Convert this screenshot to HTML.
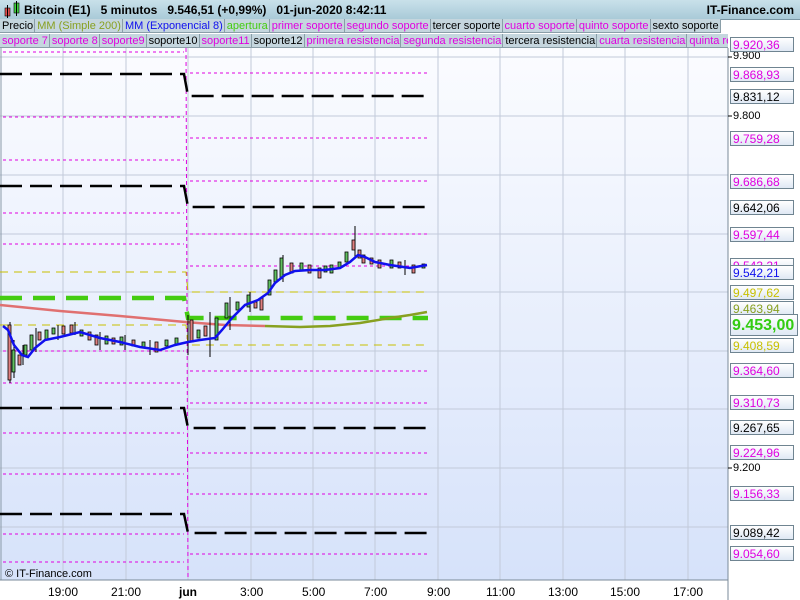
<!DOCTYPE html>
<html><head><meta charset="utf-8"><style>
body{margin:0;width:800px;height:600px;overflow:hidden;font-family:"Liberation Sans",sans-serif;background:#fff;position:relative}
.top{position:absolute;left:0;top:0;width:800px;height:19px;background:linear-gradient(#c9e1ea,#a9cad8);border-bottom:1px solid #7a96a4}
.top b{position:absolute;top:3px;font-size:12px;color:#000;white-space:nowrap}
.row{position:absolute;left:0;height:14px;display:flex;font-size:11px;line-height:14px}
.row span{border:1px solid #8a9ea8;border-top:0;border-left:0;background:#c5d6de;padding:0 1px 0 2px;white-space:nowrap}
.m{color:#e000e0}
.lbl{position:absolute;left:730px;width:64px;height:15px;border:1px solid #6f8491;background:linear-gradient(#fff,#dfe8f4);font-size:12px;line-height:15px;padding-left:2px;box-sizing:border-box;white-space:nowrap;overflow:hidden}
.ax{position:absolute;left:733px;font-size:11px}
.tx{position:absolute;top:585px;font-size:12px}
</style></head><body>
<svg width="800" height="600" style="position:absolute;left:0;top:0">
<defs><linearGradient id="bg" x1="0" y1="0" x2="0" y2="1"><stop offset="0" stop-color="#fbfcff"/><stop offset="1" stop-color="#d6e2fa"/></linearGradient></defs>
<rect x="0" y="48" width="728" height="532" fill="url(#bg)"/>
<g stroke="#c2cada" stroke-width="1">
<line x1="63" y1="48" x2="63" y2="580"/><line x1="126" y1="48" x2="126" y2="580"/><line x1="188" y1="48" x2="188" y2="580"/><line x1="251" y1="48" x2="251" y2="580"/><line x1="313" y1="48" x2="313" y2="580"/><line x1="375" y1="48" x2="375" y2="580"/><line x1="438" y1="48" x2="438" y2="580"/><line x1="500" y1="48" x2="500" y2="580"/><line x1="563" y1="48" x2="563" y2="580"/><line x1="625" y1="48" x2="625" y2="580"/><line x1="688" y1="48" x2="688" y2="580"/>
<line x1="0" y1="57" x2="728" y2="57"/><line x1="0" y1="116" x2="728" y2="116"/><line x1="0" y1="175" x2="728" y2="175"/><line x1="0" y1="234" x2="728" y2="234"/><line x1="0" y1="292" x2="728" y2="292"/><line x1="0" y1="351" x2="728" y2="351"/><line x1="0" y1="409" x2="728" y2="409"/><line x1="0" y1="468" x2="728" y2="468"/><line x1="0" y1="527" x2="728" y2="527"/>
</g>
<line x1="1" y1="48" x2="1" y2="580" stroke="#8a9aa8"/>
<line x1="728" y1="48" x2="728" y2="600" stroke="#7a8a98"/>
<line x1="0" y1="580" x2="728" y2="580" stroke="#7a8a98"/>
<line x1="186" y1="48" x2="188" y2="580" stroke="#e000e0" stroke-dasharray="4,3"/>
<g stroke="#e000e0" stroke-dasharray="3,3" stroke-width="1">
<line x1="3" y1="52" x2="184" y2="52"/><line x1="3" y1="117" x2="184" y2="117"/><line x1="3" y1="160" x2="184" y2="160"/><line x1="3" y1="213" x2="184" y2="213"/><line x1="3" y1="244" x2="184" y2="244"/><line x1="3" y1="351" x2="184" y2="351"/><line x1="3" y1="383" x2="184" y2="383"/><line x1="3" y1="433" x2="184" y2="433"/><line x1="3" y1="474" x2="184" y2="474"/><line x1="3" y1="534" x2="184" y2="534"/><line x1="3" y1="562" x2="184" y2="562"/>
<line x1="190" y1="73" x2="428" y2="73"/><line x1="190" y1="138" x2="428" y2="138"/><line x1="190" y1="181" x2="428" y2="181"/><line x1="190" y1="234" x2="428" y2="234"/><line x1="190" y1="266" x2="428" y2="266"/><line x1="190" y1="371" x2="428" y2="371"/><line x1="190" y1="403" x2="428" y2="403"/><line x1="190" y1="453" x2="428" y2="453"/><line x1="190" y1="494" x2="428" y2="494"/><line x1="190" y1="554" x2="428" y2="554"/>
</g>
<g stroke="#c8c000" stroke-dasharray="8,6" stroke-width="1">
<polyline fill="none" points="0,272 186,272 188,292 428,292"/>
<polyline fill="none" points="0,325 186,325 188,345 428,345"/>
</g>
<g stroke="#000" stroke-width="2.5" fill="none" stroke-dasharray="22,8">
<polyline points="0,74 184,74 188,96 428,96"/>
<polyline points="0,186 184,186 188,207 428,207"/>
<polyline points="0,408 184,408 188,428 428,428"/>
<polyline points="0,514 184,514 188,533 428,533"/>
</g>
<polyline fill="none" stroke="#44cc11" stroke-width="4.5" stroke-dasharray="22,11" points="0,298 184,298 188,318 428,318"/>
<polyline fill="none" stroke="#e07070" stroke-width="2.5" points="0,305 60,311 120,316 185,322 225,325 265,326"/>
<polyline fill="none" stroke="#88a020" stroke-width="2.5" points="265,326 300,327 330,326 360,323 390,318 410,315 427,312"/>
<g stroke="#000" stroke-width="1">
<line x1="10" y1="322" x2="10" y2="383"/><line x1="14" y1="340" x2="14" y2="378"/><line x1="23" y1="345" x2="23" y2="365"/><line x1="36" y1="328" x2="36" y2="352"/><line x1="58" y1="325" x2="58" y2="340"/><line x1="75" y1="322" x2="75" y2="335"/><line x1="100" y1="332" x2="100" y2="350"/><line x1="125" y1="335" x2="125" y2="350"/><line x1="150" y1="340" x2="150" y2="355"/><line x1="188" y1="315" x2="188" y2="355"/><line x1="210" y1="312" x2="210" y2="357"/><line x1="230" y1="297" x2="230" y2="330"/><line x1="250" y1="292" x2="250" y2="312"/><line x1="283" y1="255" x2="283" y2="282"/><line x1="355" y1="226" x2="355" y2="258"/><line x1="405" y1="260" x2="405" y2="275"/>
</g>
<g stroke="#000" stroke-width="0.8">
<rect x="8" y="325" width="3" height="55" fill="#e08080"/><rect x="12" y="350" width="3" height="22" fill="#60c060"/><rect x="18" y="355" width="3" height="10" fill="#e08080"/><rect x="24" y="345" width="3" height="10" fill="#60c060"/><rect x="30" y="335" width="3" height="15" fill="#60c060"/><rect x="38" y="332" width="3" height="8" fill="#e08080"/><rect x="45" y="330" width="3" height="10" fill="#60c060"/><rect x="52" y="328" width="3" height="6" fill="#60c060"/><rect x="62" y="326" width="3" height="8" fill="#e08080"/><rect x="70" y="325" width="3" height="8" fill="#e08080"/><rect x="80" y="330" width="3" height="6" fill="#60c060"/><rect x="88" y="332" width="3" height="8" fill="#e08080"/><rect x="95" y="335" width="3" height="10" fill="#e08080"/><rect x="105" y="336" width="3" height="8" fill="#60c060"/><rect x="112" y="338" width="3" height="6" fill="#e08080"/><rect x="120" y="337" width="3" height="8" fill="#60c060"/><rect x="132" y="340" width="3" height="6" fill="#e08080"/><rect x="142" y="342" width="3" height="6" fill="#60c060"/><rect x="155" y="342" width="3" height="10" fill="#e08080"/><rect x="165" y="340" width="3" height="6" fill="#60c060"/><rect x="175" y="338" width="3" height="6" fill="#60c060"/>
<rect x="190" y="320" width="3" height="22" fill="#e08080"/><rect x="197" y="330" width="3" height="8" fill="#60c060"/><rect x="204" y="326" width="3" height="10" fill="#e08080"/><rect x="215" y="318" width="3" height="22" fill="#60c060"/><rect x="225" y="303" width="3" height="15" fill="#60c060"/><rect x="236" y="302" width="3" height="8" fill="#60c060"/><rect x="247" y="295" width="3" height="12" fill="#60c060"/><rect x="254" y="302" width="3" height="6" fill="#e08080"/><rect x="260" y="298" width="3" height="12" fill="#e08080"/><rect x="268" y="280" width="3" height="15" fill="#60c060"/><rect x="274" y="270" width="3" height="12" fill="#60c060"/><rect x="280" y="258" width="3" height="20" fill="#60c060"/><rect x="290" y="263" width="3" height="10" fill="#e08080"/><rect x="300" y="263" width="3" height="8" fill="#60c060"/><rect x="308" y="265" width="3" height="8" fill="#e08080"/><rect x="318" y="268" width="3" height="10" fill="#e08080"/><rect x="324" y="266" width="3" height="6" fill="#60c060"/><rect x="330" y="265" width="3" height="8" fill="#60c060"/><rect x="338" y="262" width="3" height="6" fill="#60c060"/><rect x="345" y="252" width="3" height="10" fill="#60c060"/><rect x="352" y="240" width="3" height="10" fill="#e08080"/><rect x="358" y="250" width="3" height="8" fill="#e08080"/><rect x="362" y="255" width="3" height="8" fill="#e08080"/><rect x="370" y="258" width="3" height="6" fill="#e08080"/><rect x="378" y="260" width="3" height="8" fill="#e08080"/><rect x="390" y="260" width="3" height="8" fill="#60c060"/><rect x="398" y="262" width="3" height="6" fill="#e08080"/><rect x="412" y="265" width="3" height="8" fill="#e08080"/><rect x="422" y="264" width="3" height="4" fill="#60c060"/>
</g>
<polyline fill="none" stroke="#1010ee" stroke-width="2.5" points="3,326 8,330 14,345 22,355 28,357 35,348 45,340 60,337 80,332 100,338 120,342 140,347 160,350 175,345 188,342 200,340 215,338 222,330 232,318 245,305 258,300 268,293 275,283 285,275 295,271 310,270 325,270 340,268 350,262 358,255 365,257 375,262 390,265 410,268 427,265"/>
<text x="5" y="577" font-family="Liberation Sans" font-size="11" fill="#000">© IT-Finance.com</text>
<g stroke="#000"><line x1="728" y1="57" x2="732" y2="57"/><line x1="728" y1="116" x2="732" y2="116"/><line x1="728" y1="468" x2="732" y2="468"/></g>
</svg>
<div class="top">
<svg width="22" height="19" style="position:absolute;left:2px;top:0"><rect x="3" y="8" width="5" height="8" fill="#e05050" stroke="#000" stroke-width=".6"/><line x1="5.5" y1="5" x2="5.5" y2="18" stroke="#000"/><rect x="12" y="3" width="5" height="10" fill="#40d040" stroke="#000" stroke-width=".6"/><line x1="14.5" y1="1" x2="14.5" y2="16" stroke="#000"/></svg>
<b style="left:24px">Bitcoin (E1) &nbsp; 5 minutos &nbsp; 9.546,51 (+0,99%) &nbsp; 01-jun-2020 8:42:11</b>
<b style="right:6px">IT-Finance.com</b>
</div>
<div class="row" style="top:19px"><span style="color:#000">Precio</span><span style="color:#88a020">MM (Simple 200)</span><span style="color:#1010ee">MM (Exponencial 8)</span><span style="color:#44cc11">apertura</span><span class="m">primer soporte</span><span class="m">segundo soporte</span><span>tercer soporte</span><span class="m">cuarto soporte</span><span class="m">quinto soporte</span><span>sexto soporte</span></div>
<div class="row" style="top:34px;width:728px;overflow:hidden"><span class="m">soporte 7</span><span class="m">soporte 8</span><span class="m">soporte9</span><span>soporte10</span><span class="m">soporte11</span><span>soporte12</span><span class="m">primera resistencia</span><span class="m">segunda resistencia</span><span>tercera resistencia</span><span class="m">cuarta resistencia</span><span class="m">quinta resistencia</span></div>
<div class="ax" style="top:50px">9.900</div><div class="ax" style="top:110px">9.800</div><div class="ax" style="top:462px">9.200</div>
<div class="lbl m" style="top:37px">9.920,36</div>
<div class="lbl m" style="top:67px">9.868,93</div>
<div class="lbl" style="top:89px">9.831,12</div>
<div class="lbl m" style="top:131px">9.759,28</div>
<div class="lbl m" style="top:174px">9.686,68</div>
<div class="lbl" style="top:200px">9.642,06</div>
<div class="lbl m" style="top:227px">9.597,44</div>
<div class="lbl m" style="top:258px">9.543,21</div>
<div class="lbl" style="top:265px;color:#1010ee">9.542,21</div>
<div class="lbl" style="top:285px;color:#c8c000">9.497,62</div>
<div class="lbl" style="top:301px;color:#88a020">9.463,94</div>
<div class="lbl" style="top:314px;height:22px;width:68px;left:730px;font-size:16px;line-height:22px;font-weight:bold;color:#33cc11;padding-left:1px">9.453,00</div>
<div class="lbl" style="top:338px;color:#c8c000">9.408,59</div>
<div class="lbl m" style="top:363px">9.364,60</div>
<div class="lbl m" style="top:395px">9.310,73</div>
<div class="lbl" style="top:420px">9.267,65</div>
<div class="lbl m" style="top:445px">9.224,96</div>
<div class="lbl m" style="top:486px">9.156,33</div>
<div class="lbl" style="top:525px">9.089,42</div>
<div class="lbl m" style="top:546px">9.054,60</div>
<div class="tx" style="left:48px">19:00</div><div class="tx" style="left:111px">21:00</div><div class="tx" style="left:179px;font-weight:bold">jun</div><div class="tx" style="left:240px">3:00</div><div class="tx" style="left:302px">5:00</div><div class="tx" style="left:364px">7:00</div><div class="tx" style="left:427px">9:00</div><div class="tx" style="left:486px">11:00</div><div class="tx" style="left:548px">13:00</div><div class="tx" style="left:610px">15:00</div><div class="tx" style="left:673px">17:00</div>
</body></html>
